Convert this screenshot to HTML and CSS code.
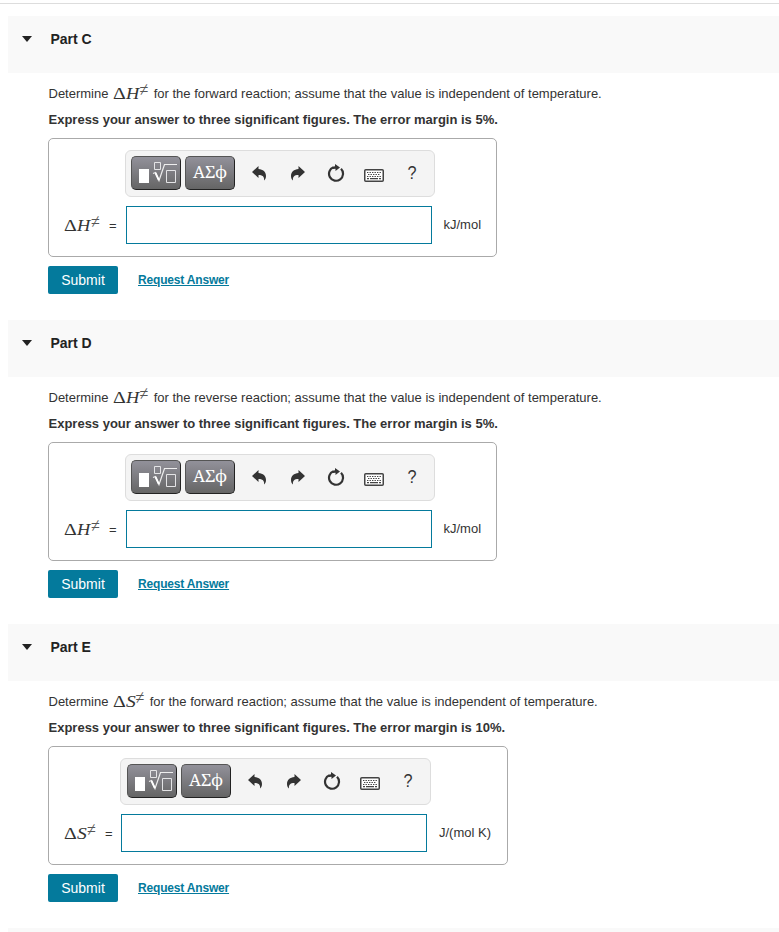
FILE: index.html
```
<!DOCTYPE html>
<html lang="en">
<head>
<meta charset="utf-8">
<title>Parts C to E</title>
<link rel="stylesheet" href="styles.css">
</head>
<body>
<svg class="defs" aria-hidden="true">
  <symbol id="template" viewBox="0 0 50 34"><path d="M8 13h10v14H8z" fill="#fff"/><path d="M23.500 6.500h6v7h-6zM35.500 14.500h9v12h-9z" fill="none" stroke="#e4e4e6" stroke-width="1"/><path d="M22 17.500l2.500-1 3.500 8 5.500-16H46" fill="none" stroke="#eee" stroke-width="1.200"/><path d="M24.500 17l3.300 7" stroke="#fff" stroke-width="1.800"/></symbol>
  <symbol id="undo" viewBox="0 0 14 15"><path d="M0 6L6.500 0v3c4.500.3 7.500 3 7.500 7 0 2-.8 3.600-2 4.500.5-3.500-1-5.500-5.500-5.500v3z" fill="#333"/></symbol>
  <symbol id="reset" viewBox="0 0 18 18"><path d="M6.500 3.200A7 7 0 1 0 14 4.800" fill="none" stroke="#333" stroke-width="2.200"/><path d="M8 0l5 3.600L8.500 7V4.700L6 5V2.700L8 2.300z" fill="#333"/></symbol>
  <symbol id="keyboard" viewBox="0 0 20 13"><rect x=".75" y=".75" width="18.500" height="11.500" rx="1" fill="#fff" stroke="#444" stroke-width="1.500"/><path d="M3 3.500h14M4 5.500h12M3 7.500h14" stroke="#444" stroke-width="1.200" stroke-dasharray="1.400 1.100"/><path d="M3 9.700h2m1 0h8m1 0h2" stroke="#444" stroke-width="1.200"/></symbol>
</svg>
<main>
  <section class="part">
    <header><i class="caret"></i><h2>Part C</h2></header>
    <div class="body">
      <p>Determine <span class="math"><b>Δ</b><i>H</i><sup>≠</sup></span> for the forward reaction; assume that the value is independent of temperature.</p>
      <p class="hint">Express your answer to three significant figures. The error margin is 5%.</p>
      <div class="answer">
        <div class="toolbar"><button class="key"><svg><use href="#template"/></svg></button><button class="key greek">ΑΣϕ</button><svg class="undo"><use href="#undo"/></svg><svg class="redo"><use href="#undo"/></svg><svg class="reset"><use href="#reset"/></svg><svg class="keyboard"><use href="#keyboard"/></svg><span class="help">?</span></div>
        <label><span class="math"><b>Δ</b><i>H</i><sup>≠</sup></span><span class="eq">=</span></label><input type="text"><span class="unit">kJ/mol</span>
      </div>
      <div class="actions"><button class="submit">Submit</button><a href="#">Request Answer</a></div>
    </div>
  </section>
  <section class="part">
    <header><i class="caret"></i><h2>Part D</h2></header>
    <div class="body">
      <p>Determine <span class="math"><b>Δ</b><i>H</i><sup>≠</sup></span> for the reverse reaction; assume that the value is independent of temperature.</p>
      <p class="hint">Express your answer to three significant figures. The error margin is 5%.</p>
      <div class="answer">
        <div class="toolbar"><button class="key"><svg><use href="#template"/></svg></button><button class="key greek">ΑΣϕ</button><svg class="undo"><use href="#undo"/></svg><svg class="redo"><use href="#undo"/></svg><svg class="reset"><use href="#reset"/></svg><svg class="keyboard"><use href="#keyboard"/></svg><span class="help">?</span></div>
        <label><span class="math"><b>Δ</b><i>H</i><sup>≠</sup></span><span class="eq">=</span></label><input type="text"><span class="unit">kJ/mol</span>
      </div>
      <div class="actions"><button class="submit">Submit</button><a href="#">Request Answer</a></div>
    </div>
  </section>
  <section class="part entropy">
    <header><i class="caret"></i><h2>Part E</h2></header>
    <div class="body">
      <p>Determine <span class="math"><b>Δ</b><i>S</i><sup>≠</sup></span> for the forward reaction; assume that the value is independent of temperature.</p>
      <p class="hint">Express your answer to three significant figures. The error margin is 10%.</p>
      <div class="answer">
        <div class="toolbar"><button class="key"><svg><use href="#template"/></svg></button><button class="key greek">ΑΣϕ</button><svg class="undo"><use href="#undo"/></svg><svg class="redo"><use href="#undo"/></svg><svg class="reset"><use href="#reset"/></svg><svg class="keyboard"><use href="#keyboard"/></svg><span class="help">?</span></div>
        <label><span class="math"><b>Δ</b><i>S</i><sup>≠</sup></span><span class="eq">=</span></label><input type="text"><span class="unit">J/(mol K)</span>
      </div>
      <div class="actions"><button class="submit">Submit</button><a href="#">Request Answer</a></div>
    </div>
  </section>
  <div class="next"></div>
</main>
</body>
</html>
```
FILE: styles.css
```
* { box-sizing: border-box; }
body { margin: 0; height: 932px; overflow: hidden; background: #fff; color: #333; font: 13px/26px "Liberation Sans", Arial, sans-serif; }
.defs { display: none; }
main { margin-top: 3px; padding: 12px 0 0 8px; border-top: 1px solid #ddd; }
.part { height: 304px; }
header { display: flex; align-items: flex-start; height: 57px; padding: 10px 0 0 14px; background: #f9f9f9; }
.caret { width: 0; height: 0; margin: 10px 17px 0 0; border: 5.5px solid transparent; border-top: 6px solid #222; border-bottom: 0; }
h2 { margin: 0 0 0 1.5px; color: #222; font-size: 14px; line-height: 26px; }
.body { padding: 8px 0 0 40px; }
p { height: 26px; margin: 0; padding-left: .5px; white-space: nowrap; }
.hint { font-weight: bold; }
.math { display: inline-flex; width: 38px; height: 20px; padding-left: .5px; line-height: 20px; font-family: "Liberation Serif", serif; font-size: 17px; vertical-align: baseline; }
.math b { width: 13px; font-weight: normal; transform: scaleX(1.17); transform-origin: left; }
.math i { width: 14px; transform: scaleX(1.08); transform-origin: left; }
.math sup { width: 10px; height: 12px; color: #555; font-size: 16px; line-height: 12px; transform: scaleY(1.25); }
p .math { position: relative; top: 1px; }
.entropy .math { width: 34px; }
.entropy .math i { width: 10px; transform: scaleX(1.15); }
.answer { display: grid; grid-template-columns: 77px 306px auto; grid-template-rows: 47px 38px; row-gap: 9px; width: 449px; height: 119px; margin-top: 5px; padding-top: 11px; border: 1px solid #aaa; border-radius: 5px; }
.entropy .answer { grid-template-columns: 72px 306px auto; width: 460px; }
.toolbar { grid-column: 2 / 4; display: flex; align-items: center; width: 310px; height: 47px; margin-left: -1px; padding-left: 5px; border: 1px solid #ddd; border-radius: 6px; background: #f4f4f4; }
.entropy .toolbar { width: 311px; padding-left: 6px; }
.key { flex: none; width: 50px; height: 34px; margin: 0 4px 1px 0; padding: 0; border: 1px solid #555; border-right-color: #222; border-bottom: 1.5px solid #222; border-radius: 5px; background: linear-gradient(#92919a, #656565); }
.key svg { display: block; width: 50px; height: 34px; margin: -1px; }
.key.greek { margin-right: 17px; color: #fff; font: 17px/28px "Noto Serif", "DejaVu Serif", serif; letter-spacing: -.2px; padding-bottom: 2px; }
.undo, .redo { width: 14px; height: 15px; margin-bottom: 1px; }
.redo { margin-left: 25px; transform: scaleX(-1); }
.reset { width: 18px; height: 18px; margin-left: 22px; margin-bottom: 1px; }
.keyboard { width: 20px; height: 13px; margin: 3px 0 0 19px; }
.help { width: 12px; margin: -1px 0 0 23px; font-size: 18px; transform: scaleX(.9); }
label { display: flex; align-items: center; padding-left: 14.5px; }
label .math { position: relative; top: 1px; }
.eq { margin: 1px 0 0 7.5px; }
input { width: 306px; height: 38px; padding: 0; border: 1px solid #047a9c; border-radius: 0; background: #fff; }
.unit { padding-left: 11.5px; line-height: 37px; }
.entropy .unit { padding-left: 12px; }
.actions { display: flex; gap: 20px; margin-top: 9px; }
.submit { width: 70px; height: 28px; padding: 0; border: 0; border-radius: 2px; background: #047a9c; color: #fff; font: 14px/28px "Liberation Sans", Arial, sans-serif; }
a { color: #047a9c; font-size: 12px; font-weight: bold; line-height: 28px; letter-spacing: -.18px; }
.next { height: 20px; background: #f9f9f9; }
```
